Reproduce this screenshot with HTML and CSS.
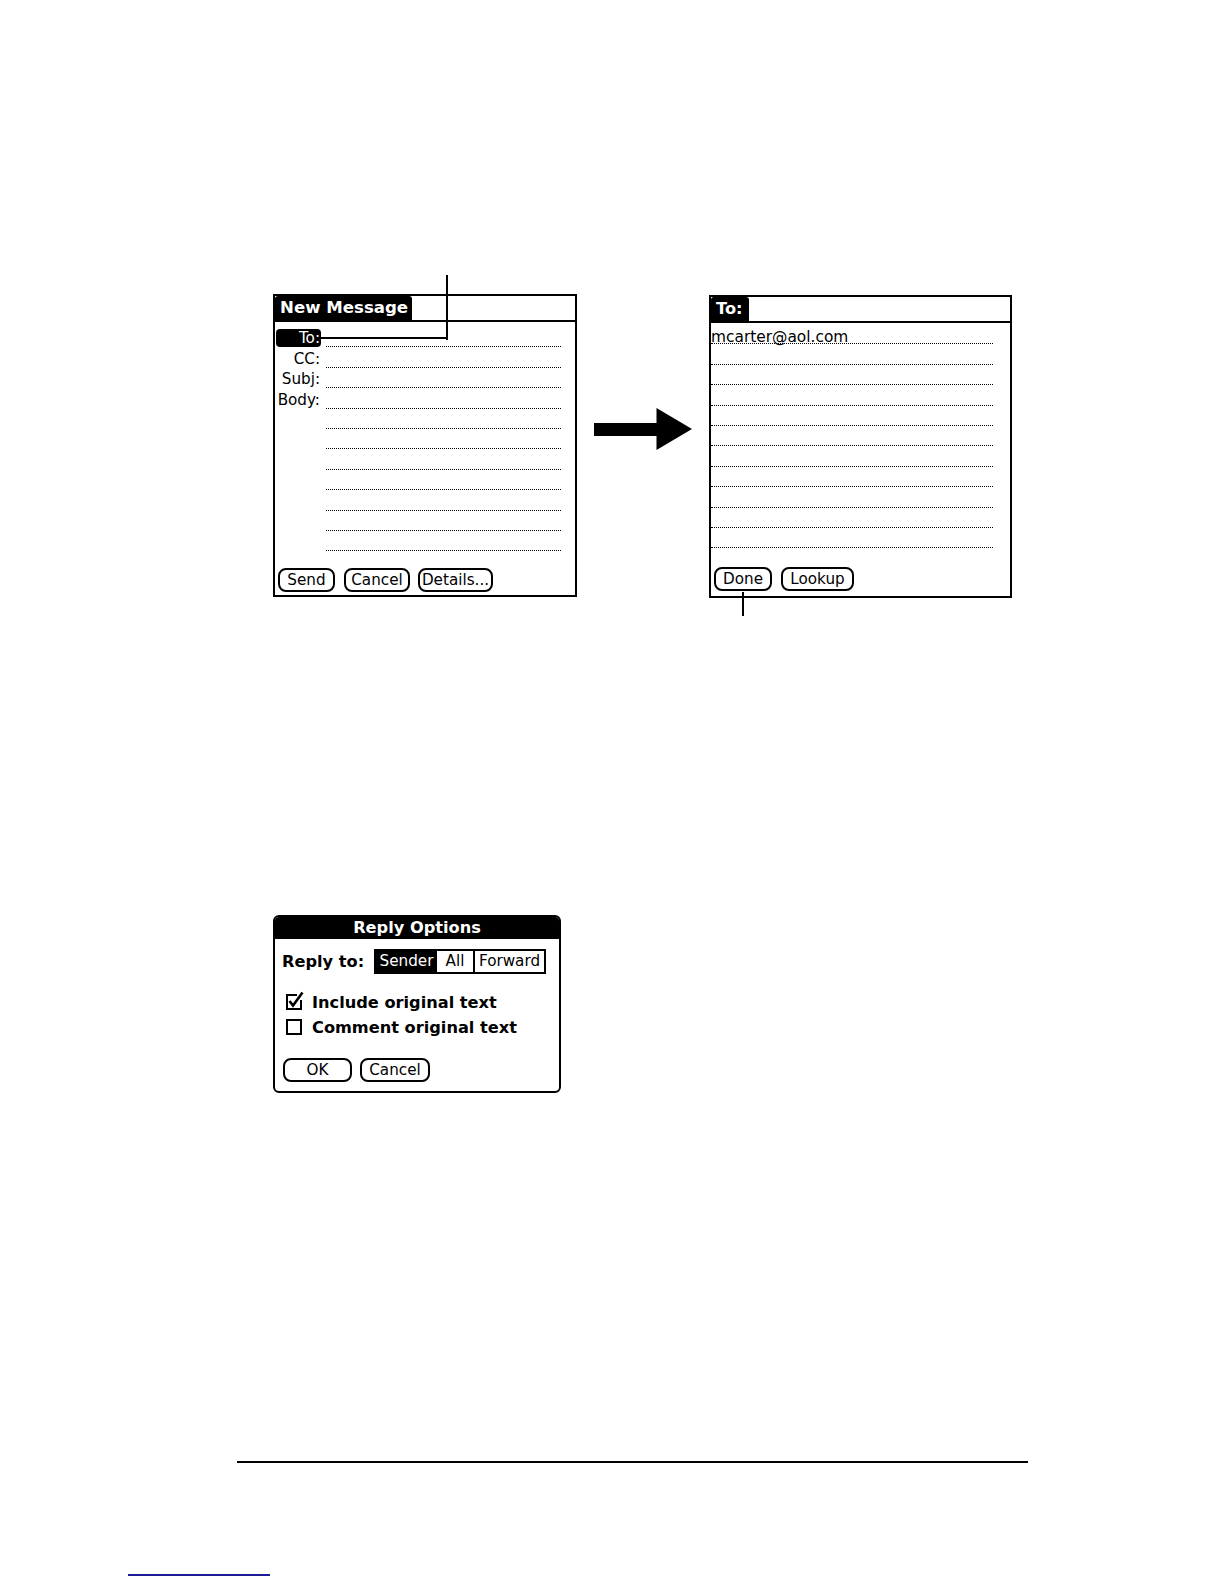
FILE: index.html
```html
<!DOCTYPE html>
<html>
<head>
<meta charset="utf-8">
<link rel="stylesheet" href="styles.css">
</head>
<body>
<div class="page">
  <section class="figure-row">
    <div class="screen screen-new">
      <span class="callout callout-to-v"></span>
      <span class="callout callout-to-h"></span>
      <div class="titlebar"><span class="tab tab-wide">New Message</span></div>
      <div class="fields">
        <div class="row"><span class="label label-selected">To:</span><span class="field"></span></div>
        <div class="row"><span class="label">CC:</span><span class="field"></span></div>
        <div class="row"><span class="label">Subj:</span><span class="field"></span></div>
        <div class="row"><span class="label">Body:</span><span class="field"></span></div>
        <div class="row"><span class="label"></span><span class="field"></span></div>
        <div class="row"><span class="label"></span><span class="field"></span></div>
        <div class="row"><span class="label"></span><span class="field"></span></div>
        <div class="row"><span class="label"></span><span class="field"></span></div>
        <div class="row"><span class="label"></span><span class="field"></span></div>
        <div class="row"><span class="label"></span><span class="field"></span></div>
        <div class="row"><span class="label"></span><span class="field"></span></div>
      </div>
      <div class="buttons">
        <span class="btn btn-send">Send</span>
        <span class="btn btn-cancel">Cancel</span>
        <span class="btn btn-details">Details...</span>
      </div>
    </div>

    <svg class="arrow" width="98" height="42" viewBox="0 0 98 42">
      <rect x="0" y="15" width="63" height="13" fill="#000"/>
      <polygon points="62.5,0 98,21 62.5,42" fill="#000"/>
    </svg>

    <div class="screen screen-to">
      <span class="callout callout-done"></span>
      <div class="titlebar"><span class="tab">To:</span></div>
      <div class="fields">
        <div class="row"><span class="field field-text">mcarter@aol.com</span></div>
        <div class="row"><span class="field"></span></div>
        <div class="row"><span class="field"></span></div>
        <div class="row"><span class="field"></span></div>
        <div class="row"><span class="field"></span></div>
        <div class="row"><span class="field"></span></div>
        <div class="row"><span class="field"></span></div>
        <div class="row"><span class="field"></span></div>
        <div class="row"><span class="field"></span></div>
        <div class="row"><span class="field"></span></div>
        <div class="row"><span class="field"></span></div>
      </div>
      <div class="buttons">
        <span class="btn btn-done">Done</span>
        <span class="btn btn-lookup">Lookup</span>
      </div>
    </div>
  </section>

  <section class="dialog">
    <div class="dialog-title">Reply Options</div>
    <div class="reply-row">
      <span class="reply-label">Reply to:</span>
      <div class="segmented">
        <span class="seg seg-selected">Sender</span>
        <span class="seg seg-all">All</span>
        <span class="seg seg-forward">Forward</span>
      </div>
    </div>
    <div class="options">
      <div class="option">
        <svg class="checkbox" width="16" height="16" viewBox="0 0 16 16">
          <path d="M15 6 V15 H1 V1 H11" fill="none" stroke="#000" stroke-width="2"/>
          <path d="M3.5 7 L7 11.5 L16.5 -1.5" fill="none" stroke="#000" stroke-width="2.6"/>
        </svg>
        <span>Include original text</span>
      </div>
      <div class="option">
        <svg class="checkbox" width="16" height="16" viewBox="0 0 16 16">
          <rect x="1" y="1" width="14" height="14" fill="none" stroke="#000" stroke-width="2"/>
        </svg>
        <span>Comment original text</span>
      </div>
    </div>
    <div class="dialog-buttons">
      <span class="btn btn-ok">OK</span>
      <span class="btn btn-dcancel">Cancel</span>
    </div>
  </section>

  <div class="footer-rule"></div>
  <div class="link-underline"></div>
</div>
</body>
</html>
```

FILE: styles.css
```css
html, body {
  margin: 0;
  padding: 0;
  background: #fff;
}

.page {
  position: relative;
  width: 1224px;
  height: 1584px;
  padding-top: 294px;
  box-sizing: border-box;
  font-family: "DejaVu Sans", "Liberation Sans", sans-serif;
  color: #000;
  overflow: hidden;
}

/* ---------- top figure ---------- */
.figure-row {
  display: flex;
  align-items: flex-start;
  padding-left: 273px;
}

.screen {
  position: relative;
  border: 2px solid #000;
  background: #fff;
  display: flex;
  flex-direction: column;
}

.screen-new {
  width: 300px;
  height: 299px;
}

.screen-to {
  width: 299px;
  height: 299px;
  margin-left: 17px;
  margin-top: 1px;
}

.titlebar {
  display: flex;
  height: 24px;
  border-bottom: 2px solid #000;
}

.tab {
  background: #000;
  color: #fff;
  font-weight: bold;
  font-size: 16.2px;
  line-height: 24px;
  padding: 0 6px 0 5px;
  border-radius: 3px 3px 0 0;
  white-space: nowrap;
}

.tab-wide {
  font-size: 16.6px;
  padding: 0 4px 0 5px;
}

.fields {
  padding-top: 5px;
}

.screen-to .fields {
  padding-top: 1px;
}

.row {
  display: flex;
  align-items: flex-end;
  height: 20.4px;
}

.label {
  width: 45px;
  height: 18px;
  margin-left: 1px;
  padding-right: 1px;
  box-sizing: border-box;
  font-size: 15.2px;
  line-height: 18px;
  text-align: right;
  border-radius: 4px;
}

.label-selected {
  background: #000;
  color: #fff;
}

.field {
  width: 235px;
  height: 100%;
  margin-left: 5px;
  box-sizing: border-box;
  border-bottom: 1px dotted #000;
}

.screen-to .field {
  width: 282px;
  margin-left: 0;
}

.field-text {
  font-size: 15.4px;
  line-height: 17px;
  padding-top: 5px;
  white-space: nowrap;
  overflow: visible;
}

.buttons {
  display: flex;
  margin-top: 16.6px;
  margin-left: 3px;
}

.screen-to .buttons {
  margin-top: 18.6px;
}

.btn {
  display: block;
  height: 24px;
  box-sizing: border-box;
  border: 2px solid #000;
  border-radius: 8px;
  font-size: 15.2px;
  line-height: 20px;
  text-align: center;
  white-space: nowrap;
}

.btn-send { width: 57px; }
.btn-cancel { width: 66px; margin-left: 9px; }
.btn-details { width: 75px; margin-left: 8px; }
.btn-done { width: 58px; }
.btn-lookup { width: 73px; margin-left: 9px; }

.callout {
  position: absolute;
  background: #000;
  z-index: 2;
}

.callout-to-v {
  left: 171px;
  top: -21px;
  width: 2px;
  height: 65px;
}

.callout-to-h {
  left: 46px;
  top: 41px;
  width: 127px;
  height: 2px;
}

.callout-done {
  left: 31px;
  top: 295px;
  width: 2px;
  height: 24px;
}

.arrow {
  display: block;
  margin-left: 17px;
  margin-top: 114px;
}

/* ---------- dialog ---------- */
.dialog {
  margin-left: 273px;
  margin-top: 317px;
  width: 288px;
  height: 178px;
  box-sizing: border-box;
  border: 2px solid #000;
  border-radius: 6px;
  overflow: hidden;
  background: #fff;
}

.dialog-title {
  background: #000;
  color: #fff;
  height: 22px;
  line-height: 22px;
  text-align: center;
  font-weight: bold;
  font-size: 16.2px;
}

.reply-row {
  display: flex;
  align-items: center;
  height: 25px;
  margin-top: 10px;
  padding-left: 7px;
}

.reply-label {
  width: 92px;
  font-weight: bold;
  font-size: 16.2px;
  white-space: nowrap;
}

.segmented {
  display: flex;
  width: 172px;
  height: 25px;
  box-sizing: border-box;
  border: 2px solid #000;
}

.seg {
  display: block;
  box-sizing: border-box;
  font-size: 15.2px;
  line-height: 21px;
  text-align: center;
  white-space: nowrap;
}

.seg-selected {
  width: 61px;
  background: #000;
  color: #fff;
}

.seg-all {
  width: 38px;
  border-right: 2px solid #000;
}

.seg-forward {
  flex: 1;
}

.options {
  margin-top: 15.5px;
}

.option {
  display: flex;
  align-items: center;
  height: 25.5px;
  padding-left: 11px;
  font-weight: bold;
  font-size: 16.2px;
  white-space: nowrap;
}

.checkbox {
  display: block;
  overflow: visible;
  margin-right: 10px;
  margin-top: -1px;
}

.dialog-buttons {
  display: flex;
  margin-top: 17.5px;
  padding-left: 8px;
}

.btn-ok { width: 69px; }
.btn-dcancel { width: 70px; margin-left: 8px; }

/* ---------- page furniture ---------- */
.footer-rule {
  margin-top: 368px;
  margin-left: 237px;
  width: 791px;
  height: 2px;
  background: #000;
}

.link-underline {
  margin-top: 111px;
  margin-left: 128px;
  width: 142px;
  height: 2px;
  background: #1c1c96;
}
```
